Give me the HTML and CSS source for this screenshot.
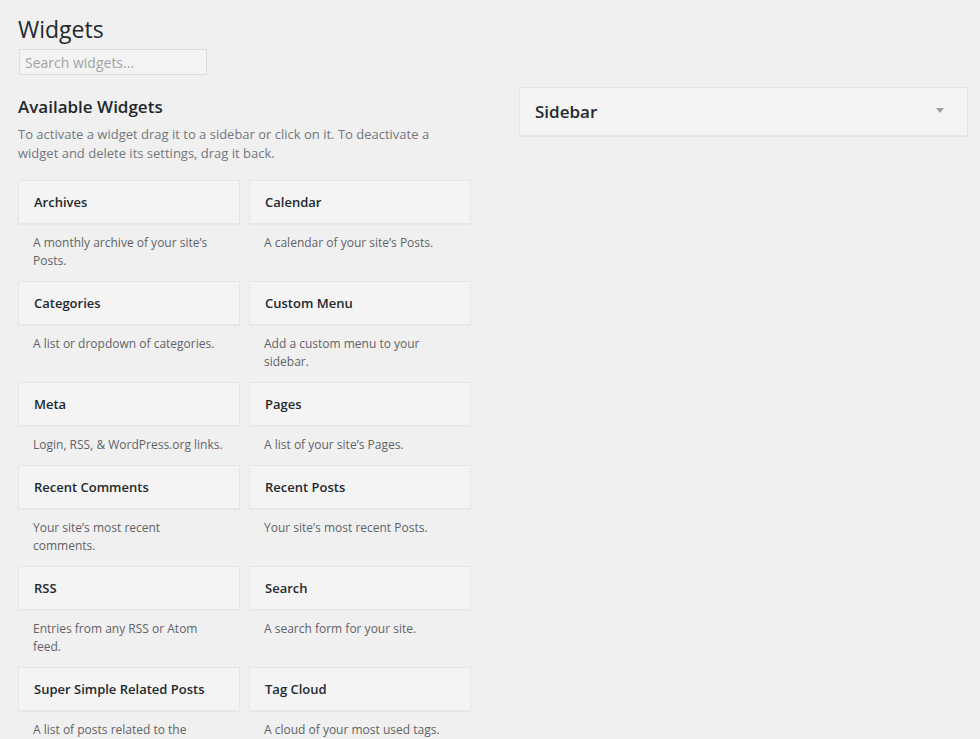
FILE: index.html
```html
<!DOCTYPE html>
<html lang="en">
<head>
<meta charset="utf-8">
<title>Widgets</title>
<link rel="stylesheet" href="styles.css">
</head>
<body>
<div class="wrap">
  <h1 class="page-title">Widgets</h1>
  <input class="search" type="search" placeholder="Search widgets...">
  <div class="columns">
    <section class="available">
      <h2 class="section-title">Available Widgets</h2>
      <p class="section-desc">To activate a widget drag it to a sidebar or click on it. To deactivate a widget and delete its settings, drag it back.</p>
      <div class="widget-grid">
        <div class="widget"><div class="widget-title">Archives</div><div class="widget-desc">A monthly archive of your site’s Posts.</div></div>
        <div class="widget"><div class="widget-title">Calendar</div><div class="widget-desc">A calendar of your site’s Posts.</div></div>
        <div class="widget"><div class="widget-title">Categories</div><div class="widget-desc">A list or dropdown of categories.</div></div>
        <div class="widget"><div class="widget-title">Custom Menu</div><div class="widget-desc">Add a custom menu to your sidebar.</div></div>
        <div class="widget"><div class="widget-title">Meta</div><div class="widget-desc">Login, RSS, &amp; WordPress.org links.</div></div>
        <div class="widget"><div class="widget-title">Pages</div><div class="widget-desc">A list of your site’s Pages.</div></div>
        <div class="widget"><div class="widget-title">Recent Comments</div><div class="widget-desc">Your site’s most recent comments.</div></div>
        <div class="widget"><div class="widget-title">Recent Posts</div><div class="widget-desc">Your site’s most recent Posts.</div></div>
        <div class="widget"><div class="widget-title">RSS</div><div class="widget-desc">Entries from any RSS or Atom feed.</div></div>
        <div class="widget"><div class="widget-title">Search</div><div class="widget-desc">A search form for your site.</div></div>
        <div class="widget"><div class="widget-title">Super Simple Related Posts</div><div class="widget-desc">A list of posts related to the</div></div>
        <div class="widget"><div class="widget-title">Tag Cloud</div><div class="widget-desc">A cloud of your most used tags.</div></div>
      </div>
    </section>
    <section class="sidebars">
      <div class="sidebar-box">
        <h2 class="sidebar-title">Sidebar</h2>
        <span class="toggle-arrow"></span>
      </div>
    </section>
  </div>
</div>
</body>
</html>
```
FILE: styles.css
```css
html, body {
  margin: 0;
  padding: 0;
}
body {
  background: #f0f0f0;
  font-family: "Open Sans", "Liberation Sans", sans-serif;
  color: #23282d;
  height: 739px;
  overflow: hidden;
}
.wrap {
  padding: 15px 12px 0 18px;
}
.page-title {
  margin: 0;
  font-size: 23px;
  font-weight: 400;
  line-height: 29px;
  color: #23282d;
}
.search {
  display: block;
  box-sizing: border-box;
  margin: 5px 0 0 1px;
  width: 188px;
  height: 26px;
  padding: 0 5px;
  border: 1px solid #dcdcdc;
  background: #f3f3f3;
  font-family: "Open Sans", "Liberation Sans", sans-serif;
  font-size: 14px;
  color: #333;
  outline: none;
  -webkit-appearance: none;
  appearance: none;
}
.search::placeholder {
  color: #a3a3a3;
}
.columns {
  display: flex;
  gap: 48px;
}
.available {
  width: 453px;
  flex: none;
}
.section-title {
  margin: 20px 0 0;
  font-size: 17px;
  font-weight: 600;
  line-height: 24px;
}
.section-desc {
  margin: 6px 0 0;
  font-size: 13px;
  line-height: 19px;
  color: #72777c;
}
.widget-grid {
  margin-top: 17px;
  display: grid;
  grid-template-columns: 222px 222px;
  column-gap: 9px;
}
.widget-title {
  box-sizing: border-box;
  height: 44px;
  padding: 11px 15px;
  border: 1px solid #e6e6e6;
  background: #f4f4f4;
  box-shadow: 0 1px 1px rgba(0, 0, 0, 0.03);
  font-size: 13px;
  font-weight: 600;
  line-height: 20px;
  color: #23282d;
}
.widget-desc {
  padding: 10px 15px 11px;
  font-size: 12px;
  line-height: 18px;
  color: #5f6368;
}
.sidebars {
  flex: 1;
  padding-top: 12px;
}
.sidebar-box {
  box-sizing: border-box;
  height: 49px;
  display: flex;
  align-items: center;
  justify-content: space-between;
  padding: 0 23px 0 15px;
  border: 1px solid #e6e6e6;
  background: #f4f4f4;
  box-shadow: 0 1px 1px rgba(0, 0, 0, 0.04);
}
.sidebar-title {
  margin: 0;
  font-size: 17px;
  font-weight: 600;
  line-height: 23px;
  color: #23282d;
}
.toggle-arrow {
  display: block;
  width: 0;
  height: 0;
  border-left: 4px solid transparent;
  border-right: 4px solid transparent;
  border-top: 5px solid #a0a0a0;
  margin-bottom: 3px;
}
```
